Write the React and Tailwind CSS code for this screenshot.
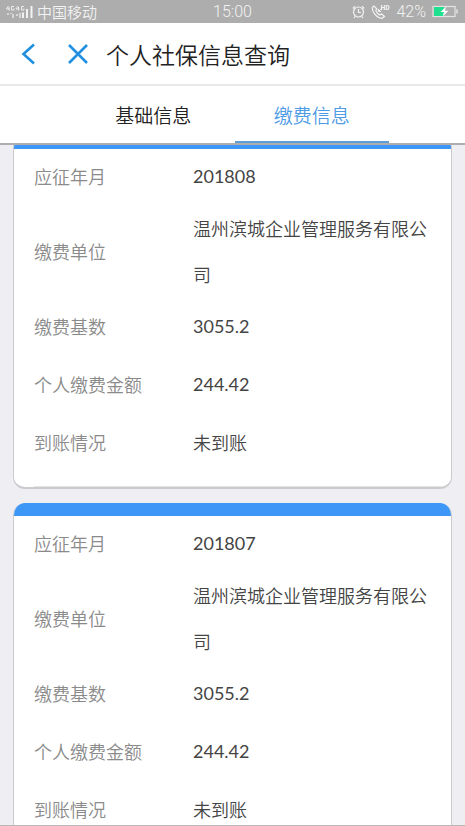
import React, { useLayoutEffect, useRef, useState } from 'react';

const tabs = [
  { id: 'basic', label: '基础信息' },
  { id: 'payment', label: '缴费信息' },
];

const records = [
  { month: '201808', company: '温州滨城企业管理服务有限公司', base: '3055.2', amount: '244.42', status: '未到账' },
  { month: '201807', company: '温州滨城企业管理服务有限公司', base: '3055.2', amount: '244.42', status: '未到账' },
];

const StatusBar = () => (
  <div className="relative flex h-[23px] shrink-0 items-center justify-between bg-[#adadad] px-1.5 text-[#f2f2f2]">
    <div className="flex items-center gap-1">
      <svg width="27" height="14" viewBox="0 0 27 14" fill="none" stroke="currentColor">
        <path d="M2.5 1 0.5 4H4M3 2V5.5M8 1.5H5.5V5H8V3.5M12 1 10 4H13.5M12.5 2V5.5M18 1.5H15.5V5H18V3.5" strokeWidth="0.9" />
        <path d="M2 8V10M5 8V9M7 9V13M11 9V11M14 8V13" strokeWidth="1.2" />
        <path d="M17 7.5V13M21 4V13M25.5 1V13" strokeWidth="2" />
      </svg>
      <span className="text-[15px] leading-5">中国移动</span>
    </div>
    <span className="absolute left-1/2 -translate-x-1/2 font-[Roboto] text-base leading-6">15:00</span>
    <div className="flex items-center gap-1.5">
      <svg width="13" height="14" viewBox="0 0 13 14" fill="none" stroke="currentColor" strokeWidth="1.2">
        <circle cx="6.5" cy="7" r="5" />
        <path d="M6.5 4V7.500H9M0.8 3.5 3 1.2M12.2 3.5 10 1.2M3 11.5 2 13M10 11.5 11 13" />
      </svg>
      <svg width="19" height="16" viewBox="0 0 19 16" fill="none" stroke="currentColor" strokeWidth="1.2">
        <path d="M3 2 1.3 3.5C0.8 8 5.5 14 11 14.3L13.5 12.5 10.5 9.8 8.8 11C6.8 10 5.5 8.4 4.7 6.3L6 5Z" />
        <path d="M7.5 7.5 10 5M7.5 5V7.5H10" strokeWidth="1" />
        <path d="M10.5 1V6M13.3 1V6M10.5 3.5H13.3M15.2 1.5V5.5H16.3C18.5 5.5 18.5 1.5 16.3 1.5Z" />
      </svg>
      <span className="font-[Roboto] text-base leading-6">42%</span>
      <svg width="27" height="13" viewBox="0 0 27 13" fill="none">
        <rect x="1" y="1.5" width="22" height="10" stroke="#e4e4e4" strokeWidth="1.2" />
        <rect x="2" y="2" width="10" height="9" fill="#1fe08f" />
        <path d="M25 4.5V8.5" stroke="#e4e4e4" strokeWidth="1.5" />
        <path d="M14 1.5 8.5 7H12L10.5 11.5 16.5 5.8H13Z" fill="#fff" />
      </svg>
    </div>
  </div>
);

const Header = () => (
  <header className="flex h-[63px] shrink-0 items-center border-b-2 border-[#e9e9e9] bg-white pl-5">
    <button type="button" aria-label="返回" className="text-[#2290e0]">
      <svg width="16" height="22" viewBox="0 0 16 22" fill="none" stroke="currentColor" strokeWidth="2.6">
        <path d="M14 1.5 3.5 11 14 20.5" />
      </svg>
    </button>
    <button type="button" aria-label="关闭" className="ml-8 text-[#2290e0]">
      <svg width="20" height="20" viewBox="0 0 20 20" fill="none" stroke="currentColor" strokeWidth="2.6">
        <path d="M1 1 19 19M19 1 1 19" />
      </svg>
    </button>
    <h1 className="ml-[18px] text-[23px] leading-8 text-[#222]">个人社保信息查询</h1>
  </header>
);

const Row = ({ label, value, numeric }) => (
  <div className="flex min-h-[58px] items-center px-5 text-lg leading-[46px]">
    <dt className="w-[159px] shrink-0 text-[#8a8a8a]">{label}</dt>
    <dd className={`min-w-0 flex-1 break-all text-[#444] ${numeric ? 'font-[Lato] font-normal' : ''}`}>{value}</dd>
  </div>
);

const RecordCard = ({ record }) => (
  <article className="overflow-hidden rounded-xl border-x border-b-2 border-[#cbcbce] bg-white">
    <div className="h-[13px] bg-[#3d97f7]" />
    <dl className="-mt-0.5">
      <Row label="应征年月" value={record.month} numeric />
      <Row label="缴费单位" value={record.company} />
      <Row label="缴费基数" value={record.base} numeric />
      <Row label="个人缴费金额" value={record.amount} numeric />
      <Row label="到账情况" value={record.status} />
    </dl>
    <div className="ml-5 h-4 border-b border-[#e4e4e0]" />
  </article>
);

export default function App() {
  const [activeTab, setActiveTab] = useState('payment');
  const listRef = useRef(null);

  // Open the list a little way down, under the tab bar
  useLayoutEffect(() => {
    if (listRef.current) {
      listRef.current.scrollTop = 24;
    }
  }, []);

  return (
    <div className="flex h-screen flex-col bg-[#eeeef3] font-['Noto_Sans_CJK_SC',sans-serif] font-[350]">
      <StatusBar />
      <Header />
      <nav className="grid h-[59px] shrink-0 grid-cols-2 gap-1 border-b-2 border-[#aeaeae] bg-white px-[76px]">
        {tabs.map((tab) => (
          <button
            key={tab.id}
            type="button"
            onClick={() => setActiveTab(tab.id)}
            className={`border-b-2 pt-1 text-[19px] ${
              activeTab === tab.id ? 'border-[#5a9bd8] text-[#4f9ce6]' : 'border-transparent text-[#222]'
            }`}
          >
            {tab.label}
          </button>
        ))}
      </nav>
      <main
        ref={listRef}
        className="flex min-h-0 flex-1 flex-col gap-3.5 overflow-y-auto border-b border-[#b8b8b8] px-[13px] py-[15px] [scrollbar-width:none] *:shrink-0"
      >
        {records.map((record) => (
          <RecordCard key={record.month} record={record} />
        ))}
      </main>
    </div>
  );
}
